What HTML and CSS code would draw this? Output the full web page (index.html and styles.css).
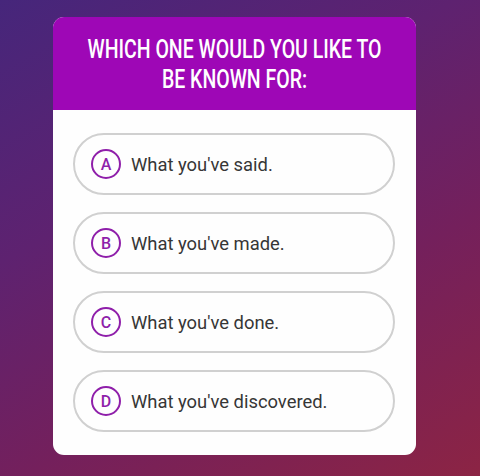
FILE: index.html
```html
<!DOCTYPE html>
<html>
<head>
<meta charset="utf-8">
<link rel="stylesheet" href="styles.css">
</head>
<body>
<div class="stage">
  <div class="card">
    <div class="header">
      <h1 class="title">WHICH ONE WOULD YOU LIKE TO<br>BE KNOWN FOR:</h1>
    </div>
    <div class="options">
      <div class="option"><span class="badge">A</span><span class="label">What you've said.</span></div>
      <div class="option"><span class="badge">B</span><span class="label">What you've made.</span></div>
      <div class="option"><span class="badge">C</span><span class="label">What you've done.</span></div>
      <div class="option"><span class="badge">D</span><span class="label">What you've discovered.</span></div>
    </div>
  </div>
</div>
</body>
</html>
```
FILE: styles.css
```css
html, body {
  margin: 0;
  padding: 0;
}
body {
  width: 480px;
  height: 476px;
  overflow: hidden;
  font-family: Roboto, "Liberation Sans", sans-serif;
}
.stage {
  width: 480px;
  height: 476px;
  box-sizing: border-box;
  padding: 17px 64px 0 53px;
  background: linear-gradient(150deg, #46267b 0%, #5e2270 35%, #74205c 65%, #8c2444 100%);
}
.card {
  width: 363px;
  height: 438px;
  border-radius: 11px;
  overflow: hidden;
  background: #fefefe;
  display: flex;
  flex-direction: column;
}
.header {
  height: 93px;
  background: #9e07b6;
  display: flex;
  align-items: center;
  justify-content: center;
  padding-top: 3px;
  box-sizing: border-box;
}
.title {
  margin: 0;
  color: #fff;
  text-align: center;
  font-family: Roboto, "Liberation Sans", sans-serif;
  font-weight: 500;
  font-size: 25px;
  line-height: 30px;
  white-space: nowrap;
  transform: scaleX(0.78);
}
.options {
  display: flex;
  flex-direction: column;
  gap: 17px;
  padding: 23px 21px 0 20px;
}
.option {
  height: 62px;
  box-sizing: border-box;
  border: 2px solid #d0d0d0;
  border-radius: 31px;
  display: flex;
  align-items: center;
  padding-left: 16px;
}
.badge {
  width: 30px;
  height: 30px;
  box-sizing: border-box;
  border: 2px solid #8f1faa;
  border-radius: 50%;
  color: #8f1faa;
  font-size: 16px;
  font-weight: 500;
  display: flex;
  align-items: center;
  justify-content: center;
  margin-right: 10px;
}
.label {
  color: #363636;
  font-size: 18.4px;
}
```
